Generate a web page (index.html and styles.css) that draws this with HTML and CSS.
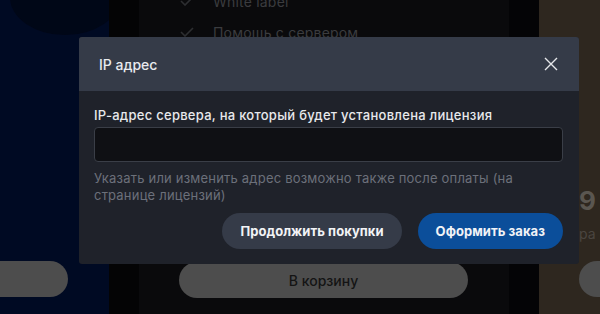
FILE: index.html
```html
<!DOCTYPE html>
<html lang="ru">
<head>
<meta charset="utf-8">
<link rel="stylesheet" href="styles.css">
</head>
<body>
<div class="page">
  <div class="col col-left">
    <div class="blob"></div>
    <div class="left-btn"></div>
  </div>
  <div class="col col-gap"></div>
  <div class="col col-main">
    <ul class="features">
      <li><svg class="check" viewBox="0 0 14 10" width="14" height="10"><path d="M1 5 L5 9 L13 1" fill="none" stroke="#2d2e31" stroke-width="1.6"/></svg><span>White label</span></li>
      <li><svg class="check" viewBox="0 0 14 10" width="14" height="10"><path d="M1 5 L5 9 L13 1" fill="none" stroke="#2d2e31" stroke-width="1.6"/></svg><span>Помощь с сервером</span></li>
    </ul>
    <div class="cart-btn">В корзину</div>
  </div>
  <div class="col col-gap2"></div>
  <div class="col col-right">
    <div class="price">9</div>
    <div class="per">ра</div>
    <div class="round-btn"></div>
  </div>
</div>

<div class="modal">
  <div class="modal-head">
    <span class="modal-title">IP адрес</span>
    <svg class="close" viewBox="0 0 14 14" width="14" height="14"><path d="M1 1 L13 13 M13 1 L1 13" stroke="#e6e7ea" stroke-width="1.4" fill="none"/></svg>
  </div>
  <div class="modal-body">
    <label class="field-label">IP-адрес сервера, на который будет установлена лицензия</label>
    <div class="input"></div>
    <p class="hint">Указать или изменить адрес возможно также после оплаты (на странице лицензий)</p>
    <div class="actions">
      <div class="btn btn-secondary">Продолжить покупки</div>
      <div class="btn btn-primary">Оформить заказ</div>
    </div>
  </div>
</div>
</body>
</html>
```
FILE: styles.css
```css
* { box-sizing: border-box; }
html, body { margin: 0; padding: 0; }
body {
  width: 600px;
  height: 314px;
  overflow: hidden;
  position: relative;
  background: #09090b;
  font-family: Inter, "Noto Sans", "Liberation Sans", sans-serif;
}
.page {
  display: grid;
  grid-template-columns: 109px 30px 370px 30px 61px;
  height: 314px;
}
.col { height: 314px; overflow: hidden; position: relative; }
.col-left { background: #000a23; }
.blob {
  position: absolute;
  left: 10px; top: -40px;
  width: 110px; height: 75px;
  border-radius: 50%;
  background: #000717;
}
.left-btn {
  position: absolute;
  left: -40px; top: 261px;
  width: 108px; height: 36px;
  border-radius: 18px;
  background: #4d4d4d;
}
.col-gap { background: #040405; }
.col-main { background: #0a0a0c; }
.col-gap2 { background: #040406; }
.col-right { background: #2e271f; }

.features {
  list-style: none;
  margin: -9px 0 0 0;
  padding: 0 0 0 41px;
}
.features li {
  display: flex;
  align-items: center;
  height: 20px;
  margin-bottom: 11px;
  font-size: 14px;
  letter-spacing: 0.2px;
  color: #3b3c3f;
}
.check { margin-right: 19px; }

.cart-btn {
  position: absolute;
  left: 40px; top: 262px;
  width: 289px; height: 36px;
  border-radius: 18px;
  background: #4d4d4d;
  color: #141414;
  font-size: 14px;
  font-weight: 500;
  display: flex;
  align-items: center;
  justify-content: center;
}
.price {
  position: absolute;
  left: 40px; top: 185px;
  font-size: 26px;
  font-weight: 700;
  color: #5a5650;
}
.per {
  position: absolute;
  left: 40px; top: 225px;
  font-size: 14px;
  color: #4a4540;
}
.round-btn {
  position: absolute;
  left: 40px; top: 261px;
  width: 60px; height: 36px;
  border-radius: 18px;
  background: #4d4d4d;
}

.modal {
  position: absolute;
  left: 79px; top: 37px;
  width: 500px;
  border-radius: 3px;
  overflow: hidden;
  background: #1f222a;
}
.modal-head {
  height: 54px;
  background: #353b48;
  display: flex;
  align-items: center;
  justify-content: space-between;
  padding: 0 21px 0 20px;
}
.modal-title {
  color: #e9eaee;
  font-size: 14px;
  font-weight: 500;
}
.modal-body {
  padding: 15px 16px 15px 15px;
}
.field-label {
  display: block;
  color: #e8e9ec;
  font-size: 13px;
  font-weight: 500;
  line-height: 18px;
  letter-spacing: 0.27px;
}
.input {
  margin-top: 3px;
  height: 35px;
  background: #0f1014;
  border: 1px solid #3a3e47;
  border-radius: 4px;
}
.hint {
  margin: 8px 0 0 0;
  color: #6c707a;
  font-size: 13px;
  line-height: 17px;
  letter-spacing: 0.2px;
  padding-right: 30px;
}
.actions {
  margin-top: 9px;
  display: flex;
  justify-content: flex-end;
  gap: 16px;
}
.btn {
  height: 36px;
  border-radius: 18px;
  padding: 0 18px;
  display: flex;
  align-items: center;
  font-size: 13px;
  font-weight: 700;
  letter-spacing: 0.05px;
  color: #f2f3f6;
}
.btn-secondary { background: #353b48; }
.btn-primary { background: #0b4e9a; }
```
